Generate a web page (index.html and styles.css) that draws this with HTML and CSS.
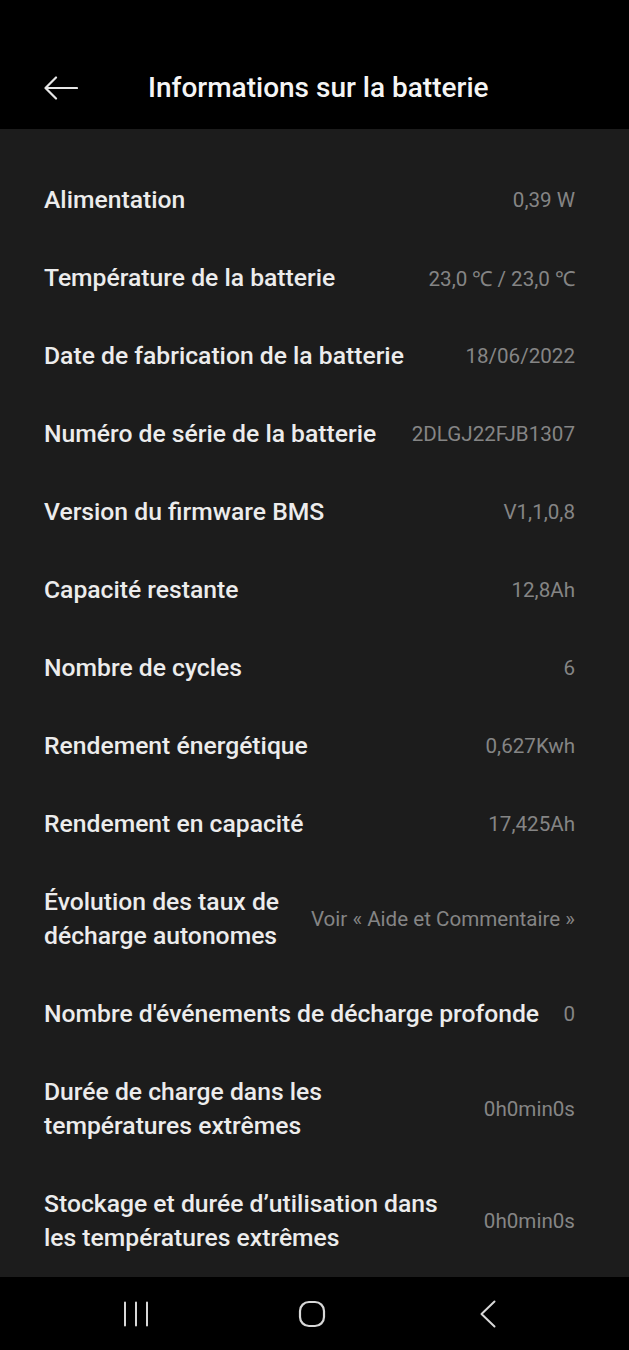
FILE: index.html
```html
<!DOCTYPE html>
<html lang="fr">

<head>
    <meta charset="UTF-8">
    <meta name="viewport" content="width=device-width, initial-scale=1.0">
    <title>Informations sur la batterie</title>
    <link rel="stylesheet" href="styles.css">
</head>

<body>
    <header class="top-bar">
        <svg class="back-arrow" width="34" height="24" viewBox="0 0 34 24">
            <path d="M33 12H2M12 1.5L1.5 12L12 22.5" fill="none" stroke="#e6e6e6" stroke-width="2.2" stroke-linecap="round" stroke-linejoin="round"/>
        </svg>
        <h1 class="title">Informations sur la batterie</h1>
    </header>

    <main class="info-list">
        <div class="info-row"><span class="label">Alimentation</span><span class="value">0,39 W</span></div>
        <div class="info-row"><span class="label">Température de la batterie</span><span class="value">23,0 ℃ / 23,0 ℃</span></div>
        <div class="info-row"><span class="label">Date de fabrication de la batterie</span><span class="value">18/06/2022</span></div>
        <div class="info-row"><span class="label">Numéro de série de la batterie</span><span class="value">2DLGJ22FJB1307</span></div>
        <div class="info-row"><span class="label">Version du firmware BMS</span><span class="value">V1,1,0,8</span></div>
        <div class="info-row"><span class="label">Capacité restante</span><span class="value">12,8Ah</span></div>
        <div class="info-row"><span class="label">Nombre de cycles</span><span class="value">6</span></div>
        <div class="info-row"><span class="label">Rendement énergétique</span><span class="value">0,627Kwh</span></div>
        <div class="info-row"><span class="label">Rendement en capacité</span><span class="value">17,425Ah</span></div>
        <div class="info-row"><span class="label">Évolution des taux de décharge autonomes</span><span class="value">Voir « Aide et Commentaire »</span></div>
        <div class="info-row"><span class="label">Nombre d'événements de décharge profonde</span><span class="value">0</span></div>
        <div class="info-row"><span class="label">Durée de charge dans les températures extrêmes</span><span class="value">0h0min0s</span></div>
        <div class="info-row"><span class="label">Stockage et durée d’utilisation dans les températures extrêmes</span><span class="value">0h0min0s</span></div>
    </main>

    <nav class="nav-bar">
        <span class="nav-icon">
            <svg width="26" height="26" viewBox="0 0 26 26">
                <path d="M2 1.5V24.5M13 1.5V24.5M24 1.5V24.5" stroke="#d8d8d8" stroke-width="2" stroke-linecap="round"/>
            </svg>
        </span>
        <span class="nav-icon">
            <svg width="28" height="28" viewBox="0 0 28 28">
                <rect x="2" y="2" width="24" height="24" rx="9" fill="none" stroke="#d8d8d8" stroke-width="2.2"/>
            </svg>
        </span>
        <span class="nav-icon">
            <svg width="18" height="28" viewBox="0 0 18 28">
                <path d="M15.5 1.5L2.5 14L15.5 26.5" fill="none" stroke="#d8d8d8" stroke-width="2" stroke-linecap="round" stroke-linejoin="round"/>
            </svg>
        </span>
    </nav>
</body>

</html>
```

FILE: styles.css
```css
* {
    box-sizing: border-box;
}
body {
    margin: 0;
    width: 629px;
    height: 1350px;
    display: flex;
    flex-direction: column;
    background-color: #1c1c1c;
    font-family: Roboto, "Liberation Sans", sans-serif;
    overflow: hidden;
}
.top-bar {
    height: 129px;
    flex-shrink: 0;
    padding: 46px 0 0 44px;
    display: flex;
    align-items: center;
    background-color: #000;
}
.back-arrow {
    flex-shrink: 0;
}
.title {
    margin: 0 0 0 70px;
    font-size: 28px;
    font-weight: 500;
    color: #f5f5f5;
}
.info-list {
    flex: 1;
    padding: 32px 54px 0 44px;
}
.info-row {
    display: flex;
    align-items: center;
    justify-content: space-between;
    gap: 24px;
    padding: 22px 0;
}
.label {
    font-size: 24.7px;
    line-height: 34px;
    font-weight: 500;
    color: #ececec;
}
.value {
    flex-shrink: 0;
    font-size: 20.6px;
    color: #858585;
    text-align: right;
}
.nav-bar {
    height: 74px;
    flex-shrink: 0;
    display: flex;
    align-items: center;
    gap: 136px;
    padding-left: 116px;
    background-color: #000;
}
.nav-icon {
    width: 40px;
    display: flex;
    justify-content: center;
}
```
